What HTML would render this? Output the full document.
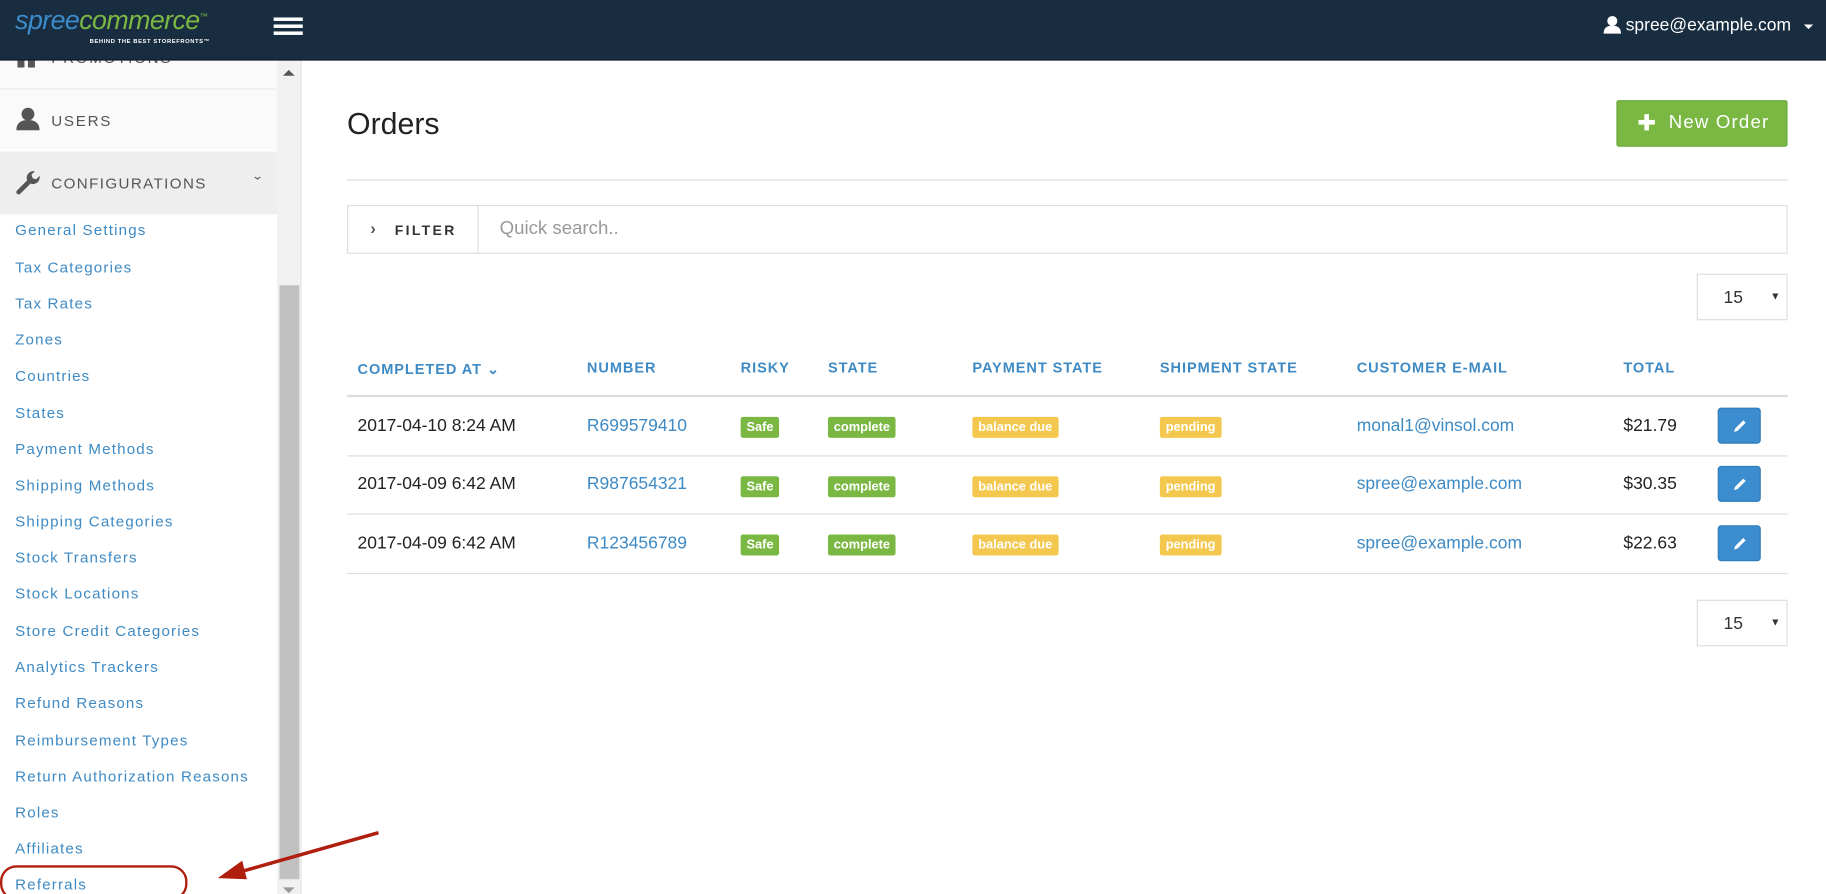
<!DOCTYPE html>
<html><head><meta charset="utf-8"><style>
html,body{margin:0;padding:0;width:1826px;height:894px;overflow:hidden;background:#fff}
#w{position:absolute;left:0;top:0;width:1568px;height:768px;transform:scale(1.16454);transform-origin:0 0;font-family:"Liberation Sans",sans-serif;overflow:hidden}
.a{position:absolute}
.hdr{left:0;top:0;width:1568px;height:51px;background:#192d40;border-bottom:1px solid #0d1822;z-index:5}
.side{left:0;top:52px;width:238px;height:716px;background:#fff}
.sb{left:238px;top:52px;width:20px;height:716px;background:#f1f1f1;border-right:1px solid #e3e3e3}
.lk{position:absolute;left:13px;font-size:13px;letter-spacing:1px;color:#3e8ac4}
.th{position:absolute;top:309px;font-size:12.5px;font-weight:bold;letter-spacing:0.8px;color:#3e8ac4}
.td{position:absolute;font-size:15px;color:#222}
.bl{color:#3e8ac4}
.lb{position:absolute;font-size:11px;font-weight:bold;color:#fff;padding:2px 5px;border-radius:2px;height:14px;line-height:14px}
.g{background:#7ab843}.y{background:#f4c84e}
.hl{position:absolute;left:298px;width:1237px;height:1px;background:#ddd}
.eb{position:absolute;left:1475px;width:37px;height:31px;background:#3c8dcf;border-radius:3px;border:1px solid #2f7bb8;box-sizing:border-box}
.sel{position:absolute;left:1457px;width:78px;height:40px;border:1px solid #ddd;box-sizing:border-box;font-size:15px;color:#333}
</style></head><body><div id="w">
<div class="a hdr"></div>
<div class="a" style="left:13px;top:4px;font-size:23px;font-style:italic;letter-spacing:-0.5px;z-index:6"><span style="color:#3d8bc9">spree</span><span style="color:#7ab843">commerce</span><sup style="color:#7ab843;font-size:7px">™</sup></div>
<div class="a" style="left:77px;top:33px;font-size:5px;font-weight:bold;color:#fff;letter-spacing:0.5px;z-index:6">BEHIND THE BEST STOREFRONTS™</div>
<div class="a" style="left:235px;top:15px;width:25px;height:3px;background:#fff;z-index:6"></div>
<div class="a" style="left:235px;top:21px;width:25px;height:3px;background:#fff;z-index:6"></div>
<div class="a" style="left:235px;top:27px;width:25px;height:3px;background:#fff;z-index:6"></div>
<svg class="a" style="left:1377px;top:13px;z-index:6" width="15" height="16" viewBox="0 0 15 16"><circle cx="7.5" cy="5" r="4.3" fill="#fff"/><path d="M0 16 Q0 9 7.5 9 Q15 9 15 16Z" fill="#fff"/></svg>
<div class="a" style="left:1396px;top:13px;font-size:15px;color:#fff;z-index:6">spree@example.com</div>
<div class="a" style="left:1549px;top:21px;border:4px solid transparent;border-top-color:#fff;border-bottom:0;z-index:6"></div>

<div class="a side"></div>
<div class="a" style="left:0;top:52px;width:238px;height:24px;background:#fafafa;border-bottom:1px solid #e6e6e6"></div>
<div class="a" style="left:15px;top:52px;width:6px;height:6px;background:#555"></div><div class="a" style="left:24px;top:52px;width:6px;height:6px;background:#555"></div>
<div class="a" style="left:44px;top:42px;font-size:13px;letter-spacing:1.5px;color:#555">PROMOTIONS</div>
<div class="a" style="left:0;top:77px;width:238px;height:52px;background:#fafafa"></div>
<svg class="a" style="left:14px;top:92px" width="20" height="20" viewBox="0 0 20 20"><circle cx="10" cy="6" r="5.5" fill="#555"/><path d="M0 20 Q0 11 10 11 Q20 11 20 20Z" fill="#555"/></svg>
<div class="a" style="left:44px;top:96px;font-size:13px;letter-spacing:1.5px;color:#555">USERS</div>
<div class="a" style="left:0;top:130px;width:238px;height:54px;background:#eee"></div>
<svg class="a" style="left:13px;top:146px" width="22" height="22" viewBox="0 0 22 22"><path d="M3 19 L12 10" stroke="#555" stroke-width="4" stroke-linecap="round"/><path d="M10 8 A6 6 0 0 1 17 1 L14 4 L15 7 L18 8 L21 5 A6 6 0 0 1 14 12Z" fill="#555"/></svg>
<div class="a" style="left:44px;top:150px;font-size:13px;letter-spacing:1.2px;color:#555">CONFIGURATIONS</div>
<div class="a" style="left:217px;top:146px;font-size:10px;color:#555;transform:scaleX(1.3)">&#8964;</div>
<div class="lk" style="top:190px">General Settings</div>
<div class="lk" style="top:222px">Tax Categories</div>
<div class="lk" style="top:253px">Tax Rates</div>
<div class="lk" style="top:284px">Zones</div>
<div class="lk" style="top:315px">Countries</div>
<div class="lk" style="top:347px">States</div>
<div class="lk" style="top:378px">Payment Methods</div>
<div class="lk" style="top:409px">Shipping Methods</div>
<div class="lk" style="top:440px">Shipping Categories</div>
<div class="lk" style="top:471px">Stock Transfers</div>
<div class="lk" style="top:502px">Stock Locations</div>
<div class="lk" style="top:534px">Store Credit Categories</div>
<div class="lk" style="top:565px">Analytics Trackers</div>
<div class="lk" style="top:596px">Refund Reasons</div>
<div class="lk" style="top:628px">Reimbursement Types</div>
<div class="lk" style="top:659px">Return Authorization Reasons</div>
<div class="lk" style="top:690px">Roles</div>
<div class="lk" style="top:721px">Affiliates</div>
<div class="lk" style="top:752px">Referrals</div>
<div class="a sb"></div>
<div class="a" style="left:240px;top:245px;width:17px;height:510px;background:#c1c1c1"></div>
<div class="a" style="left:243px;top:60px;border:5px solid transparent;border-bottom-color:#555;border-top:0"></div>
<div class="a" style="left:243px;top:762px;border:5px solid transparent;border-top-color:#999;border-bottom:0"></div>
<div class="a" style="left:0;top:743px;width:161px;height:30px;border:2.5px solid #b01e0e;border-radius:14px;box-sizing:border-box"></div>
<svg class="a" style="left:180px;top:705px" width="160" height="60"><line x1="145" y1="10" x2="25" y2="44" stroke="#b01e0e" stroke-width="3"/><path d="M7 49 L28 34 L32 50Z" fill="#b01e0e"/></svg>

<div class="a" style="left:298px;top:91px;font-size:26px;color:#222">Orders</div>
<div class="a" style="left:1388px;top:86px;width:147px;height:40px;background:#7ab843;border:1px solid #6aa83a;border-radius:2px;box-sizing:border-box"></div>
<div class="a" style="left:1407px;top:103px;width:14px;height:4px;background:#fff"></div>
<div class="a" style="left:1412px;top:98px;width:4px;height:14px;background:#fff"></div>
<div class="a" style="left:1433px;top:97px;font-size:16px;color:#fff;letter-spacing:1px">New Order</div>
<div class="hl" style="top:154px"></div>
<div class="a" style="left:298px;top:176px;width:1237px;height:42px;border:1px solid #ddd;box-sizing:border-box"></div>
<div class="a" style="left:410px;top:176px;width:1px;height:42px;background:#ddd"></div>
<div class="a" style="left:318px;top:188px;font-size:14px;font-weight:bold;color:#555">›</div>
<div class="a" style="left:339px;top:191px;font-size:12px;font-weight:bold;letter-spacing:2px;color:#333">FILTER</div>
<div class="a" style="left:429px;top:188px;font-size:16px;color:#999">Quick search..</div>
<div class="sel" style="top:235px"><span class="a" style="left:22px;top:11px">15</span><span class="a" style="left:62px;top:13px;font-size:9px">▼</span></div>
<div class="sel" style="top:515px"><span class="a" style="left:22px;top:11px">15</span><span class="a" style="left:62px;top:13px;font-size:9px">▼</span></div>

<div class="th" style="left:307px">COMPLETED AT ⌄</div>
<div class="th" style="left:504px">NUMBER</div>
<div class="th" style="left:636px">RISKY</div>
<div class="th" style="left:711px">STATE</div>
<div class="th" style="left:835px">PAYMENT STATE</div>
<div class="th" style="left:996px">SHIPMENT STATE</div>
<div class="th" style="left:1165px">CUSTOMER E-MAIL</div>
<div class="th" style="left:1394px">TOTAL</div>
<div class="hl" style="top:339px;height:2px"></div>
<div class="hl" style="top:391px"></div>
<div class="hl" style="top:441px"></div>
<div class="hl" style="top:492px"></div>

<div class="td" style="left:307px;top:357px">2017-04-10 8:24 AM</div>
<div class="td bl" style="left:504px;top:357px">R699579410</div>
<div class="lb g" style="left:636px;top:358px">Safe</div>
<div class="lb g" style="left:711px;top:358px">complete</div>
<div class="lb y" style="left:835px;top:358px">balance due</div>
<div class="lb y" style="left:996px;top:358px">pending</div>
<div class="td bl" style="left:1165px;top:357px">monal1@vinsol.com</div>
<div class="td" style="left:1394px;top:357px">$21.79</div>
<div class="eb" style="top:350px"></div>

<div class="td" style="left:307px;top:407px">2017-04-09 6:42 AM</div>
<div class="td bl" style="left:504px;top:407px">R987654321</div>
<div class="lb g" style="left:636px;top:409px">Safe</div>
<div class="lb g" style="left:711px;top:409px">complete</div>
<div class="lb y" style="left:835px;top:409px">balance due</div>
<div class="lb y" style="left:996px;top:409px">pending</div>
<div class="td bl" style="left:1165px;top:407px">spree@example.com</div>
<div class="td" style="left:1394px;top:407px">$30.35</div>
<div class="eb" style="top:400px"></div>

<div class="td" style="left:307px;top:458px">2017-04-09 6:42 AM</div>
<div class="td bl" style="left:504px;top:458px">R123456789</div>
<div class="lb g" style="left:636px;top:459px">Safe</div>
<div class="lb g" style="left:711px;top:459px">complete</div>
<div class="lb y" style="left:835px;top:459px">balance due</div>
<div class="lb y" style="left:996px;top:459px">pending</div>
<div class="td bl" style="left:1165px;top:458px">spree@example.com</div>
<div class="td" style="left:1394px;top:458px">$22.63</div>
<div class="eb" style="top:451px"></div>
<svg class="a" style="left:1487px;top:359px" width="14" height="14" viewBox="0 0 14 14"><path d="M2 12 L3 9 L10 2 L12 4 L5 11Z" fill="#fff"/></svg>
<svg class="a" style="left:1487px;top:409px" width="14" height="14" viewBox="0 0 14 14"><path d="M2 12 L3 9 L10 2 L12 4 L5 11Z" fill="#fff"/></svg>
<svg class="a" style="left:1487px;top:460px" width="14" height="14" viewBox="0 0 14 14"><path d="M2 12 L3 9 L10 2 L12 4 L5 11Z" fill="#fff"/></svg>
</div></body></html>
